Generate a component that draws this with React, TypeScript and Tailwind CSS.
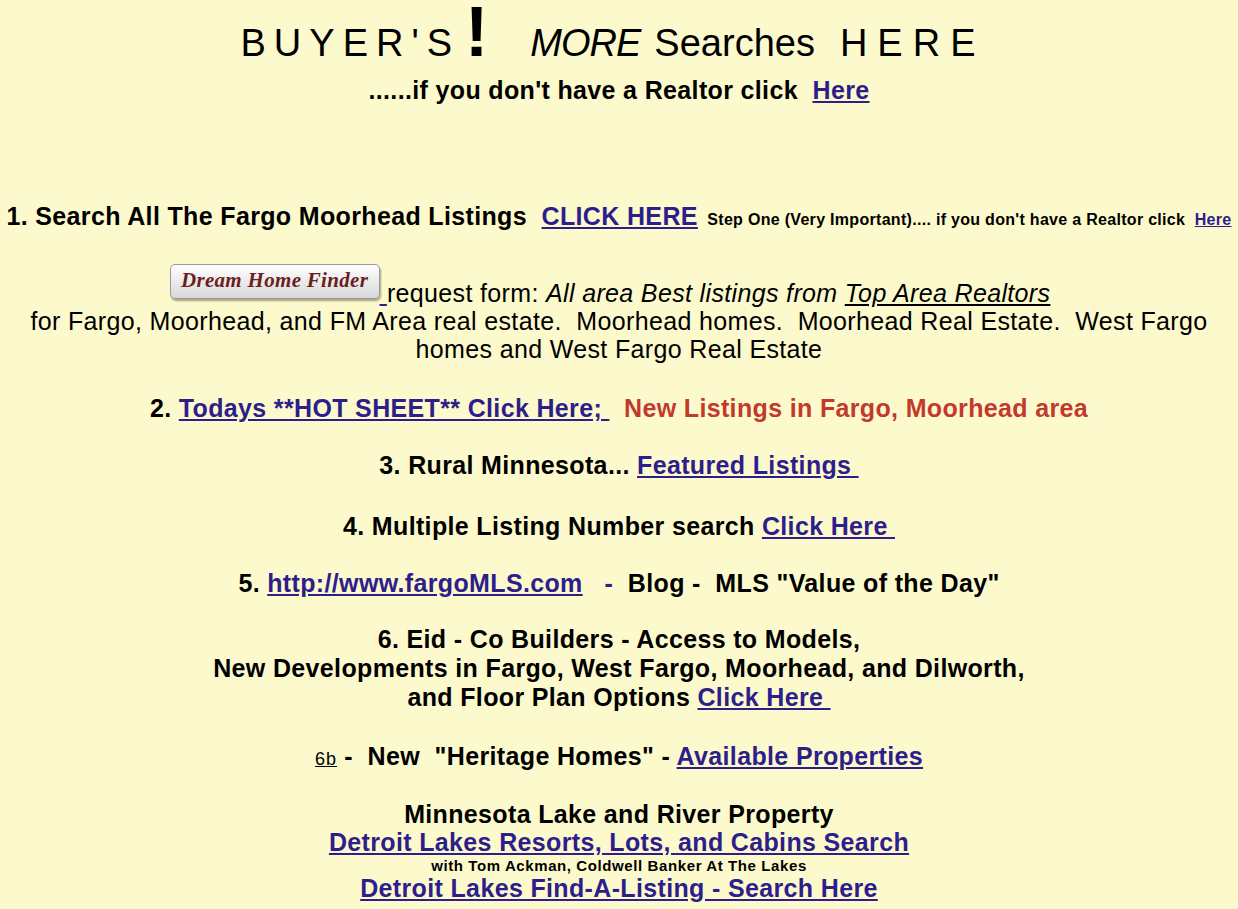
export default function App() {
  const link = "text-[#2d1e8c] underline";
  return (
    <main className="min-h-[909px] w-full bg-[#fcf9cc] text-black text-center font-['Liberation_Sans',Arial,sans-serif] overflow-hidden">
      {/* Title */}
      <h1 className="pt-[2px] pr-[12px] text-[38px] leading-[38px] font-normal whitespace-nowrap">
        <span className="tracking-[8px]">BUYER'S</span>
        <span className="ml-[5px] text-[70px] font-bold leading-[60px]">!</span>
        <i className="ml-[42px] tracking-[-1px]">MORE</i>
        <span className="ml-[14px]">Searches</span>
        <span className="ml-[25px] tracking-[10px]">HERE</span>
      </h1>
      <p className="mt-[14px] text-[25px] leading-[28px] font-bold tracking-[0.35px]">
        ......if you don't have a Realtor click&nbsp; <a className={link} href="#">Here</a>
      </p>

      {/* 1 */}
      <p className="mt-[98px] text-[25px] leading-[28px] font-bold tracking-[0.35px] whitespace-nowrap">
        1. Search All The Fargo Moorhead Listings&nbsp; <a className={link} href="#">CLICK HERE</a>
        <span className="text-[16px] tracking-[0.3px]">&nbsp; Step One (Very Important).... if you don't have a Realtor click&nbsp; <a className={link} href="#">Here</a></span>
      </p>

      {/* Dream Home Finder */}
      <div className="mt-[30px] text-[25px] leading-[28px] tracking-[0.35px] whitespace-nowrap">
        <span className="inline-block overflow-hidden align-[3px] w-[210px] h-[35px] rounded-[5px] border border-[#9a9a9a] bg-gradient-to-b from-white to-[#d8d8d8] shadow-[1px_2px_2px_rgba(0,0,0,0.35)] font-['Liberation_Serif',serif] italic font-bold text-[21px] tracking-[0.3px] leading-[31px] text-[#6b1f1f]">
          Dream Home Finder
        </span>
        <a className={link} href="#">&nbsp;</a>request form: <i>All area Best listings from <u>Top Area Realtors</u></i>
        <span className="inline-block w-[18px]"></span>
        <br />
        for Fargo, Moorhead, and FM Area real estate.&nbsp; Moorhead homes.&nbsp; Moorhead Real Estate.&nbsp; West Fargo
        <br />
        homes and West Fargo Real Estate
      </div>

      {/* 2 */}
      <p className="mt-[31px] text-[25px] leading-[28px] font-bold tracking-[0.35px] whitespace-nowrap">
        2. <a className={link} href="#">Todays **HOT SHEET** Click Here;&nbsp;</a>&nbsp; <span className="text-[#c13a2c]">New Listings in Fargo, Moorhead area</span>
      </p>

      {/* 3 */}
      <p className="mt-[29px] text-[25px] leading-[28px] font-bold tracking-[0.35px]">
        3. Rural Minnesota... <a className={link} href="#">Featured Listings&nbsp;</a>
      </p>

      {/* 4 */}
      <p className="mt-[33px] text-[25px] leading-[28px] font-bold tracking-[0.35px]">
        4. Multiple Listing Number search <a className={link} href="#">Click Here&nbsp;</a>
      </p>

      {/* 5 */}
      <p className="mt-[29px] text-[25px] leading-[28px] font-bold tracking-[0.35px]">
        5. <a className={link} href="#">http://www.fargoMLS.com</a>&nbsp;&nbsp; <span className="text-[#2d1e8c]">-</span>&nbsp; Blog -&nbsp; MLS "Value of the Day"
      </p>

      {/* 6 */}
      <p className="mt-[28px] text-[25px] leading-[29px] font-bold tracking-[0.35px]">
        6. Eid - Co Builders - Access to Models,
        <br />
        New Developments in Fargo, West Fargo, Moorhead, and Dilworth,
        <br />
        and Floor Plan Options <a className={link} href="#">Click Here&nbsp;</a>
      </p>

      {/* 6b */}
      <p className="mt-[30px] text-[25px] leading-[28px] font-bold tracking-[0.35px]">
        <u className="text-[18px] font-normal tracking-[1px]">6b</u> -&nbsp; New&nbsp; "Heritage Homes" - <a className={link} href="#">Available Properties</a>
      </p>

      {/* Lakes */}
      <div className="mt-[27px] font-bold tracking-[0.35px]">
        <p className="text-[25px] leading-[28px]">Minnesota Lake and River Property</p>
        <p className="text-[25px] leading-[29px]">
          <a className={link} href="#">Detroit Lakes Resorts, Lots, and Cabins Search</a>
        </p>
        <p className="text-[15px] leading-[17px] tracking-[0.6px]">with Tom Ackman, Coldwell Banker At The Lakes</p>
        <p className="text-[25px] leading-[28px]">
          <a className={link} href="#">Detroit Lakes Find-A-Listing - Search Here</a>
        </p>
      </div>
    </main>
  );
}
